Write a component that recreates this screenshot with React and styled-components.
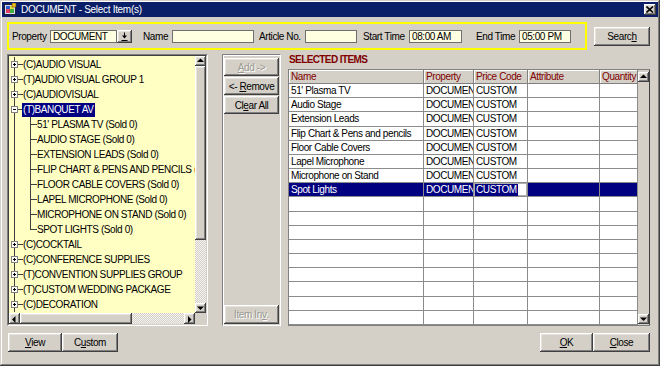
import styled, { createGlobalStyle, css } from 'styled-components'

const GlobalStyle = createGlobalStyle`
  html, body {
    margin: 0;
    padding: 0;
  }
  body {
    font-family: "Liberation Sans", Arial, sans-serif;
    font-size: 10px;
    letter-spacing: -0.4px;
    color: #000;
    background: #d4d0c8;
  }
`

const NAVY = '#000080'
const GRID = '#8c8c8c'

const raised = css`
  background: #d4d0c8;
  box-shadow: inset -1px -1px #404040, inset 1px 1px #fff,
    inset -2px -2px #808080, inset 2px 2px #e6e3dc;
`

const treeItems = [
  { label: '(C)AUDIO VISUAL', level: 0 },
  { label: '(T)AUDIO VISUAL GROUP 1', level: 0 },
  { label: '(C)AUDIOVISUAL', level: 0 },
  { label: '(T)BANQUET AV', level: 0, open: true, selected: true },
  { label: "51' PLASMA TV (Sold 0)", level: 1 },
  { label: 'AUDIO STAGE (Sold 0)', level: 1 },
  { label: 'EXTENSION LEADS (Sold 0)', level: 1 },
  { label: 'FLIP CHART & PENS AND PENCILS (Sold 0)', level: 1 },
  { label: 'FLOOR CABLE COVERS (Sold 0)', level: 1 },
  { label: 'LAPEL MICROPHONE (Sold 0)', level: 1 },
  { label: 'MICROPHONE ON STAND (Sold 0)', level: 1 },
  { label: 'SPOT LIGHTS (Sold 0)', level: 1, last: true },
  { label: '(C)COCKTAIL', level: 0 },
  { label: '(C)CONFERENCE SUPPLIES', level: 0 },
  { label: '(T)CONVENTION SUPPLIES GROUP', level: 0 },
  { label: '(T)CUSTOM WEDDING PACKAGE', level: 0 },
  { label: '(C)DECORATION', level: 0 },
]

const selectedItems = [
  "51' Plasma TV",
  'Audio Stage',
  'Extension Leads',
  'Flip Chart & Pens and pencils',
  'Floor Cable Covers',
  'Lapel Microphone',
  'Microphone on Stand',
  'Spot Lights',
]

const columns = ['Name', 'Property', 'Price Code', 'Attribute', 'Quantity']
const EMPTY_ROWS = 9

export default function App() {
  return (
    <>
      <GlobalStyle />
      <Window>
        <TitleBar>
          <AppIcon />
          <Title>DOCUMENT - Select Item(s)</Title>
          <CloseBox>
            <svg width="8" height="7" viewBox="0 0 8 7">
              <path d="M0.5 0.5 L7 6.5 M7 0.5 L0.5 6.5" stroke="#000" strokeWidth="1.6" />
            </svg>
          </CloseBox>
        </TitleBar>

        <Body>
          <FilterRow>
            <FilterBox>
              <Field>
                <FieldLabel $w={38}>Property</FieldLabel>
                <TextBox $w={67}>DOCUMENT</TextBox>
                <DropButton>
                  <svg width="9" height="9" viewBox="0 0 9 9">
                    <path d="M4.5 0.5 V4" stroke="#000" />
                    <path d="M2 3.5 H7 L4.5 6.5 Z" fill="#000" />
                    <path d="M1.5 8.5 H7.5" stroke="#000" />
                  </svg>
                </DropButton>
              </Field>
              <Field $offset={11}>
                <FieldLabel $w={29}>Name</FieldLabel>
                <TextBox $w={82} />
              </Field>
              <Field $offset={5}>
                <FieldLabel $w={46}>Article No.</FieldLabel>
                <TextBox $w={52} />
              </Field>
              <Field $offset={6}>
                <FieldLabel $w={46}>Start Time</FieldLabel>
                <TextBox $w={53}>08:00 AM</TextBox>
              </Field>
              <Field $offset={14}>
                <FieldLabel $w={43}>End Time</FieldLabel>
                <TextBox $w={52}>05:00 PM</TextBox>
              </Field>
            </FilterBox>
            <Button $w={56} $h={19}>
              Searc<u>h</u>
            </Button>
          </FilterRow>

          <Main>
            <TreeFrame>
              <TreeInner>
                <TreeList>
                  {treeItems.map((item) => (
                    <TreeRow key={item.label}>
                      <TreeGutter {...item} />
                      <TreeLabel $selected={item.selected}>{item.label}</TreeLabel>
                    </TreeRow>
                  ))}
                </TreeList>
                <VScroll>
                  <ArrowButton dir="up" />
                  <Thumb $size={174} />
                  <DitherTrack />
                  <ArrowButton dir="down" />
                </VScroll>
                <HScroll>
                  <ArrowButton dir="left" />
                  <Thumb $size={112} $horizontal />
                  <DitherTrack />
                  <ArrowButton dir="right" />
                </HScroll>
                <Corner />
              </TreeInner>
            </TreeFrame>

            <ActionPanel>
              <Button $w={55} $h={18} disabled>
                <u>A</u>dd -&gt;
              </Button>
              <Button $w={55} $h={18}>
                &lt;-&nbsp;<u>R</u>emove
              </Button>
              <Button $w={55} $h={18}>
                Cl<u>e</u>ar All
              </Button>
              <Spacer />
              <Button $w={55} $h={19} disabled>
                Item In<u>v</u>.
              </Button>
            </ActionPanel>

            <SelectedPanel>
              <Heading>SELECTED ITEMS</Heading>
              <TableFrame>
                <Grid>
                  {columns.map((c) => (
                    <HeadCell key={c}>{c}</HeadCell>
                  ))}
                  {selectedItems.map((name, i) => {
                    const active = i === selectedItems.length - 1
                    return [
                      <Cell key={name + 'n'} $active={active}>{name}</Cell>,
                      <Cell key={name + 'p'} $active={active}>DOCUMENT</Cell>,
                      active ? (
                        <EditCell key={name + 'c'}>
                          <EditText>CUSTOM</EditText>
                        </EditCell>
                      ) : (
                        <Cell key={name + 'c'}>CUSTOM</Cell>
                      ),
                      <Cell key={name + 'a'} $active={active} />,
                      <Cell key={name + 'q'} $active={active} />,
                    ]
                  })}
                  {Array.from({ length: EMPTY_ROWS * columns.length }, (_, i) => (
                    <Cell key={'e' + i} />
                  ))}
                </Grid>
                <TableScroll>
                  <ArrowButton dir="up" />
                  <PlainTrack />
                  <ArrowButton dir="down" />
                </TableScroll>
              </TableFrame>
            </SelectedPanel>
          </Main>

          <Footer>
            <ButtonGroup>
              <Button $w={54} $h={19}>
                <u>V</u>iew
              </Button>
              <Button $w={56} $h={19}>
                C<u>u</u>stom
              </Button>
            </ButtonGroup>
            <ButtonGroup>
              <Button $w={53} $h={19}>
                <u>O</u>K
              </Button>
              <Button $w={57} $h={19}>
                <u>C</u>lose
              </Button>
            </ButtonGroup>
          </Footer>
        </Body>
      </Window>
    </>
  )
}

function AppIcon() {
  return (
    <svg width="13" height="13" viewBox="0 0 13 13" style={{ flex: 'none' }}>
      <rect x="0.5" y="1.5" width="11" height="10" fill="#d8d8f0" stroke="#202040" />
      <rect x="2" y="3" width="4" height="3" fill="#3060d0" />
      <rect x="6" y="3" width="4" height="3" fill="#e0e040" />
      <rect x="2" y="6" width="4" height="4" fill="#e04060" />
      <rect x="6" y="6" width="4" height="4" fill="#40b040" />
      <rect x="8" y="0" width="4" height="4" fill="#f0c020" stroke="#604000" strokeWidth="0.6" />
    </svg>
  )
}

function TreeGutter({ level, open, last }) {
  const line = '#404040'
  if (level === 0) {
    return (
      <svg width="14" height="15" viewBox="0 0 14 15" style={{ flex: 'none' }}>
        <path d="M5.5 0 V15" stroke={line} />
        <rect x="2.5" y="4.5" width="6" height="6" fill="#fff" stroke="#808080" />
        <path d="M4 7.5 H7" stroke="#000" />
        {!open && <path d="M5.5 6 V9" stroke="#000" />}
        <path d="M9 7.5 H14" stroke={line} />
      </svg>
    )
  }
  return (
    <svg width="28" height="15" viewBox="0 0 28 15" style={{ flex: 'none' }}>
      <path d="M5.5 0 V15" stroke={line} />
      <path d={last ? 'M21.5 0 V8' : 'M21.5 0 V15'} stroke={line} />
      <path d="M21.5 7.5 H28" stroke={line} />
    </svg>
  )
}

function ArrowButton({ dir }) {
  const shapes = {
    up: 'M2 6 L5.5 2.5 L9 6 Z',
    down: 'M2 3.5 L5.5 7 L9 3.5 Z',
    left: 'M6.5 2 L3 5.5 L6.5 9 Z',
    right: 'M4 2 L7.5 5.5 L4 9 Z',
  }
  const vertical = dir === 'up' || dir === 'down'
  return (
    <ArrowBox $vertical={vertical}>
      <svg width="11" height="10" viewBox="0 0 11 10">
        <path d={shapes[dir]} fill="#000" />
      </svg>
    </ArrowBox>
  )
}

const Window = styled.div`
  width: 660px;
  height: 366px;
  box-sizing: border-box;
  padding: 2px;
  display: flex;
  flex-direction: column;
  background: #d4d0c8;
  box-shadow: inset -1px -1px #404040, inset 1px 1px #d4d0c8,
    inset -2px -2px #808080, inset 2px 2px #fff;
`

const TitleBar = styled.div`
  height: 15px;
  flex: none;
  display: flex;
  align-items: center;
  gap: 4px;
  padding: 0 2px 0 2px;
  background: #0b1f69;
`

const Title = styled.div`
  flex: 1;
  color: #fff;
  font-size: 10px;
  letter-spacing: -0.3px;
  white-space: nowrap;
`

const CloseBox = styled.div`
  ${raised};
  width: 12px;
  height: 11px;
  display: flex;
  align-items: center;
  justify-content: center;
`

const Body = styled.div`
  flex: 1;
  display: flex;
  flex-direction: column;
  padding: 5px 0 0 5px;
`

const FilterRow = styled.div`
  display: flex;
  align-items: center;
  gap: 7px;
`

const FilterBox = styled.div`
  width: 580px;
  height: 28px;
  box-sizing: border-box;
  border: 2px solid #ffff00;
  padding-left: 3px;
  display: flex;
  align-items: center;
`

const Field = styled.div`
  display: flex;
  align-items: center;
  margin-left: ${(p) => p.$offset || 0}px;
`

const FieldLabel = styled.span`
  width: ${(p) => p.$w}px;
  flex: none;
  white-space: nowrap;
`

const TextBox = styled.div`
  width: ${(p) => p.$w}px;
  height: 13px;
  box-sizing: border-box;
  flex: none;
  border: 1px solid #6f6f6f;
  background: #ffffe1;
  padding-left: 2px;
  line-height: 11px;
  white-space: nowrap;
  overflow: hidden;
`

const DropButton = styled.div`
  ${raised};
  width: 15px;
  height: 13px;
  flex: none;
  display: flex;
  align-items: center;
  justify-content: center;
`

const Button = styled.div`
  ${raised};
  width: ${(p) => p.$w}px;
  height: ${(p) => p.$h}px;
  flex: none;
  box-sizing: border-box;
  display: flex;
  align-items: center;
  justify-content: center;
  white-space: nowrap;
  color: ${(p) => (p.disabled ? '#9a9890' : '#000')};
  text-shadow: ${(p) => (p.disabled ? '1px 1px #fff' : 'none')};
  u {
    text-underline-offset: 1px;
  }
`

const Main = styled.div`
  margin-top: 4px;
  height: 272px;
  display: flex;
`

const TreeFrame = styled.div`
  width: 201px;
  height: 272px;
  box-sizing: border-box;
  border: 1px solid;
  border-color: #808080 #fff #fff #808080;
`

const TreeInner = styled.div`
  height: 100%;
  box-sizing: border-box;
  border: 1px solid;
  border-color: #404040 #d4d0c8 #d4d0c8 #404040;
  display: grid;
  grid-template-columns: 1fr 11px;
  grid-template-rows: 1fr 11px;
`

const TreeList = styled.div`
  background: #ffffc4;
  overflow: hidden;
  padding-top: 1px;
`

const TreeRow = styled.div`
  height: 15px;
  display: flex;
  align-items: center;
  white-space: nowrap;
`

const TreeLabel = styled.span`
  height: 14px;
  line-height: 14px;
  padding: 0 1px;
  margin-left: -1px;
  background: ${(p) => (p.$selected ? NAVY : 'transparent')};
  color: ${(p) => (p.$selected ? '#fff' : '#000')};
`

const dither = css`
  background-color: #d4d0c8;
  background-image: repeating-conic-gradient(#f4f3ef 0 25%, #d4d0c8 0 50%);
  background-size: 2px 2px;
`

const VScroll = styled.div`
  display: flex;
  flex-direction: column;
`

const HScroll = styled.div`
  display: flex;
`

const ArrowBox = styled.div`
  ${raised};
  flex: none;
  width: 11px;
  height: ${(p) => (p.$vertical ? '10px' : '11px')};
  display: flex;
  align-items: center;
  justify-content: center;
`

const Thumb = styled.div`
  ${raised};
  flex: none;
  ${(p) => (p.$horizontal ? `width: ${p.$size}px;` : `height: ${p.$size}px;`)}
`

const DitherTrack = styled.div`
  ${dither};
  flex: 1;
`

const Corner = styled.div`
  background: #d4d0c8;
`

const ActionPanel = styled.div`
  width: 59px;
  margin-left: 14px;
  box-sizing: border-box;
  border: 1px solid;
  border-color: #808080 #fff #fff #808080;
  box-shadow: inset 1px 1px #fff;
  padding: 3px 1px 1px 1px;
  display: flex;
  flex-direction: column;
  gap: 1px;
`

const Spacer = styled.div`
  flex: 1;
`

const SelectedPanel = styled.div`
  margin-left: 7px;
  display: flex;
  flex-direction: column;
`

const Heading = styled.div`
  height: 15px;
  line-height: 12px;
  padding-left: 1px;
  font-weight: bold;
  letter-spacing: -0.6px;
  color: #800000;
`

const TableFrame = styled.div`
  flex: 1;
  display: flex;
  border: 1px solid #808080;
  border-right: none;
`

const Grid = styled.div`
  width: 349px;
  display: grid;
  grid-template-columns: 135px 50px 54px 72px 38px;
  grid-template-rows: 14px repeat(17, 1fr);
  background: #fff;
`

const HeadCell = styled.div`
  background: #d4d0c8;
  color: #800000;
  border-right: 1px solid #808080;
  border-bottom: 1px solid #808080;
  box-shadow: inset 1px 1px #fff;
  padding-left: 2px;
  display: flex;
  align-items: center;
  white-space: nowrap;
  overflow: hidden;
`

const Cell = styled.div`
  border-right: 1px solid ${GRID};
  border-bottom: 1px solid ${GRID};
  background: ${(p) => (p.$active ? NAVY : '#fff')};
  color: ${(p) => (p.$active ? '#fff' : '#000')};
  padding-left: 2px;
  display: flex;
  align-items: center;
  white-space: nowrap;
  overflow: hidden;
`

const EditCell = styled(Cell)`
  background: #fff;
  padding-left: 1px;
  box-shadow: inset 0 0 0 1px #b0b0b0;
`

const EditText = styled.span`
  background: ${NAVY};
  color: #fff;
  padding: 0 1px;
  line-height: 12px;
`

const TableScroll = styled.div`
  width: 12px;
  display: flex;
  flex-direction: column;
  padding: 2px 1px 1px 0;
  box-sizing: border-box;
  border-right: 1px solid #404040;
  background: #d4d0c8;
`

const PlainTrack = styled.div`
  flex: 1;
`

const Footer = styled.div`
  margin-top: 7px;
  display: flex;
  justify-content: space-between;
  width: 643px;
  padding-left: 1px;
  box-sizing: border-box;
`

const ButtonGroup = styled.div`
  display: flex;
`
